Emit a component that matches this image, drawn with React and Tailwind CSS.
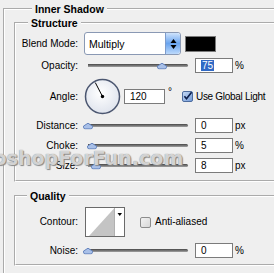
import React from "react";

const groove = "[border-style:groove] border-2 border-white";

function Legend({ children, className = "" }) {
  return (
    <legend className={`px-[3px] text-[10.5px] font-bold leading-[12px] text-black ${className}`}>
      {children}
    </legend>
  );
}

function Label({ children }) {
  return <div className="w-[62px] shrink-0 text-right text-[10px] leading-[12px] text-black">{children}</div>;
}

function Thumb({ left }) {
  return (
    <svg
      width="10"
      height="7"
      viewBox="0 0 10 7"
      className="absolute top-1/2 -translate-y-1/2"
      style={{ left: left - 5 }}
    >
      <path
        d="M0.5 4.6 L0.5 3.6 L5 0.7 L9.5 3.6 L9.5 4.6 Q9.5 6.4 7.8 6.4 L2.2 6.4 Q0.5 6.4 0.5 4.6Z"
        fill="#a9c0e8"
        stroke="#6584bd"
        strokeWidth="1"
      />
    </svg>
  );
}

function Slider({ pos }) {
  return (
    <div className="relative ml-[8px] flex h-[15px] w-[102px] items-center">
      <div className="ml-[2px] h-[3px] w-[100px] rounded-r-full bg-linear-to-b from-[#474747] to-[#a3a3a3]" />
      <Thumb left={pos} />
    </div>
  );
}

function Field({ value, width = "w-[38px]", selected = false, className = "ml-[7px]" }) {
  return (
    <div
      className={`${className} flex h-[15px] ${width} shrink-0 items-center border border-[#7b7b7b] bg-white pl-[5px] text-[10px] leading-[11px] text-black`}
    >
      {selected ? <span className="bg-[#316ac5] px-px text-white">{value}</span> : value}
    </div>
  );
}

function SliderRow({ label, pos, value, unit, selected, className = "" }) {
  return (
    <div className={`flex items-center ${className}`}>
      <Label>{label}</Label>
      <Slider pos={pos} />
      <Field value={value} selected={selected} />
      <span className="ml-[2px] text-[10px] leading-[12px] text-black">{unit}</span>
    </div>
  );
}

function Dial() {
  return (
    <svg width="37" height="37" viewBox="0 0 37 37" className="ml-[6px] shrink-0">
      <defs>
        <radialGradient id="dialFill" cx="45%" cy="40%" r="65%">
          <stop offset="0%" stopColor="#ffffff" />
          <stop offset="100%" stopColor="#dde2ec" />
        </radialGradient>
      </defs>
      <circle cx="18.5" cy="18.5" r="17" fill="url(#dialFill)" stroke="#4b5670" strokeWidth="1.5" />
      <line x1="18.5" y1="18.5" x2="11.3" y2="4.6" stroke="#000" strokeWidth="1" />
      <circle cx="18.5" cy="18.5" r="1.7" fill="#000" />
    </svg>
  );
}

function CheckBox({ checked }) {
  return (
    <svg width="11" height="11" viewBox="0 0 11 11" className="shrink-0">
      <defs>
        <linearGradient id={checked ? "cbOn" : "cbOff"} x1="0" y1="0" x2="1" y2="1">
          <stop offset="0%" stopColor={checked ? "#c9dcf6" : "#f4f4f4"} />
          <stop offset="100%" stopColor={checked ? "#6f97d6" : "#d6d6d6"} />
        </linearGradient>
      </defs>
      <rect
        x="0.5"
        y="0.5"
        width="10"
        height="10"
        rx="1.5"
        fill={`url(#${checked ? "cbOn" : "cbOff"})`}
        stroke={checked ? "#4d6c9e" : "#8c8c8c"}
      />
      {checked && <path d="M2.4 5.3 L4.5 7.8 L9.6 1.2" fill="none" stroke="#0b1d4a" strokeWidth="1.6" />}
    </svg>
  );
}

function Contour() {
  return (
    <svg width="40" height="30" viewBox="0 0 40 30" className="ml-[7px] shrink-0">
      <rect x="0.5" y="0.5" width="39" height="29" fill="#fff" stroke="#6a6a6a" />
      <polygon points="4,29 29,1.5 29,29" fill="#c4c4c4" />
      <line x1="29.5" y1="1" x2="29.5" y2="29" stroke="#b0b0b0" />
      <polygon points="32.5,6 37,6 34.75,9" fill="#000" />
    </svg>
  );
}

function BlendSelect() {
  return (
    <div className="ml-[6px] flex h-[23px] w-[97px] shrink-0 items-stretch rounded-[3px] border border-[#8a99b4] bg-white">
      <div className="flex flex-1 items-center pl-[4px] pt-[2px] text-[10.5px] text-black">Multiply</div>
      <div className="flex w-[15px] flex-col items-center justify-center gap-[2px] rounded-r-[3px] border-l border-[#7d9ccc] bg-linear-to-b from-[#cfe3fb] via-[#69a4ef] to-[#bcd9fb]">
        <svg width="7" height="12" viewBox="0 0 7 12">
          <polygon points="3.5,1 6.5,5 0.5,5" fill="#000" />
          <polygon points="0.5,7 6.5,7 3.5,11" fill="#000" />
        </svg>
      </div>
    </div>
  );
}

export default function App() {
  return (
    <div className="relative h-[273px] w-[274px] overflow-hidden bg-[#efefef] font-['Liberation_Sans',Arial,sans-serif]">
      <fieldset className={`ml-[3px] mt-[3px] w-[300px] min-w-0 p-0 pb-[20px] pl-[9px] ${groove}`}>
        <Legend className="ml-[18px]">Inner Shadow</Legend>

        <fieldset className={`mt-[2px] w-[300px] min-w-0 p-0 pb-[7px] pt-[3px] ${groove}`}>
          <Legend className="ml-[12px]">Structure</Legend>

          <div className="flex items-center">
            <Label>Blend Mode:</Label>
            <BlendSelect />
            <div className="ml-[4px] h-[16px] w-[31px] border border-[#7b7b7b] bg-black" />
          </div>

          <SliderRow className="mt-[3px]" label="Opacity:" pos={76} value="75" unit="%" selected />

          <div className="mt-[5px] flex items-center">
            <Label>Angle:</Label>
            <Dial />
            <Field className="ml-[3px]" width="w-[41px]" value="120" />
            <span className="ml-[3px] self-start pt-[9px] text-[10px] leading-[10px] text-black">°</span>
            <div className="ml-[10px] flex items-center gap-[3px]">
              <CheckBox checked />
              <span className="text-[10px] leading-[12px] tracking-[-0.3px] text-black">Use Global Light</span>
            </div>
          </div>

          <SliderRow className="mt-[3px]" label="Distance:" pos={1.5} value="0" unit="px" />
          <SliderRow className="mt-[5px]" label="Choke:" pos={6} value="5" unit="%" />
          <SliderRow className="mt-[5px]" label="Size:" pos={10} value="8" unit="px" />
        </fieldset>

        <fieldset className={`mt-[8px] w-[300px] min-w-0 p-0 pb-[6px] pt-[5px] ${groove}`}>
          <Legend className="ml-[11px]">Quality</Legend>

          <div className="flex items-center">
            <Label>Contour:</Label>
            <Contour />
            <div className="ml-[15px] flex items-center gap-[4px]">
              <CheckBox checked={false} />
              <span className="text-[10px] leading-[12px] text-black">Anti-aliased</span>
            </div>
          </div>

          <SliderRow className="mt-[6px]" label="Noise:" pos={1.5} value="0" unit="%" />
        </fieldset>
      </fieldset>

      <div className="pointer-events-none absolute left-[-56px] top-[148px] whitespace-nowrap font-['DejaVu_Sans',sans-serif] text-[19px] font-bold leading-[20px] text-[#eeeeee]/80 [text-shadow:0_0_1px_#707070,1px_1px_1px_#8a8a8a]">
        PhotoshopForFun.com
      </div>
    </div>
  );
}
